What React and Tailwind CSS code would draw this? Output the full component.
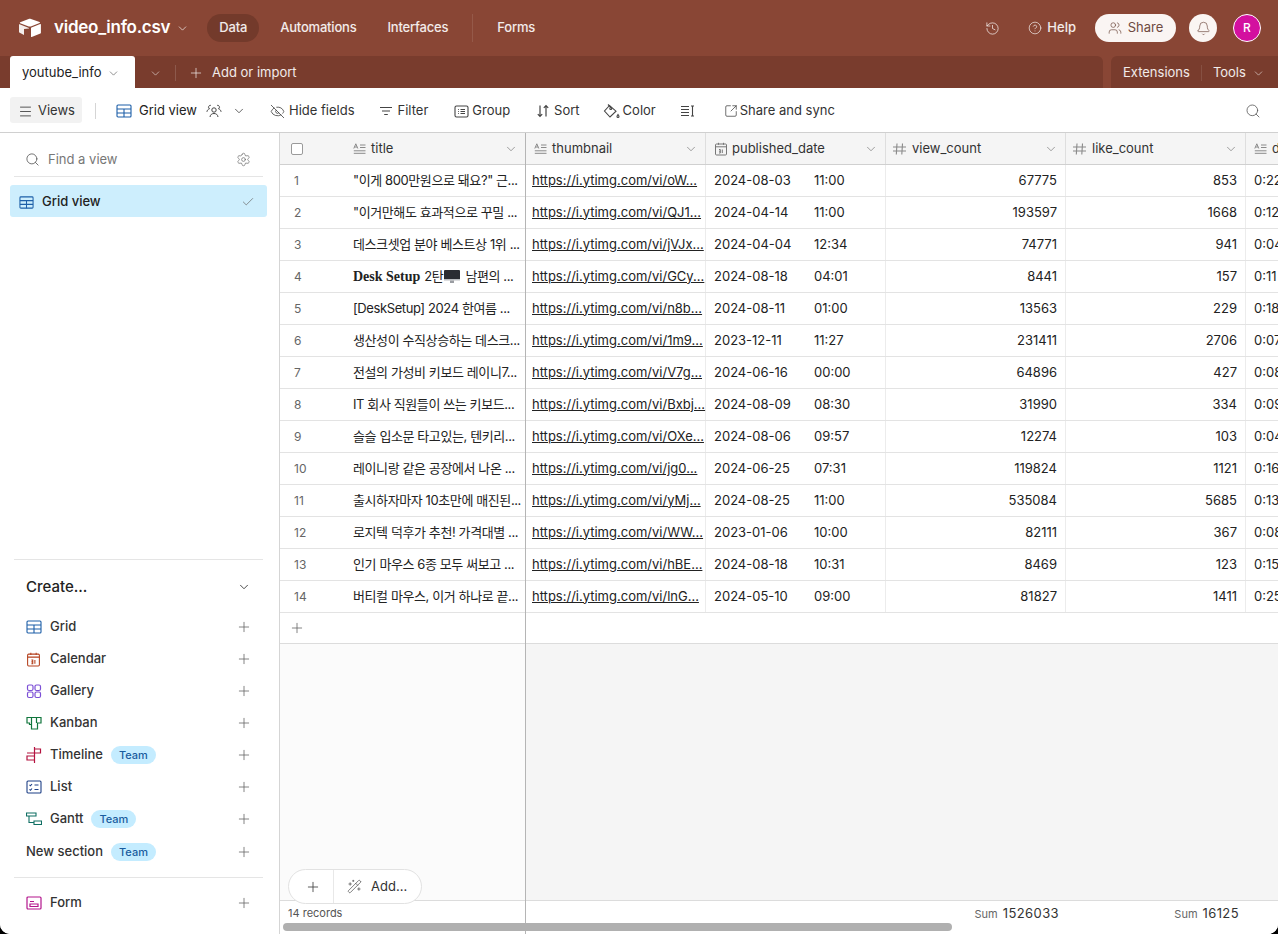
import { Bell, Check, ChevronDown, CircleHelp, EyeOff, History, Menu, Plus, Search, Settings, SquareArrowOutUpRight, Users, WandSparkles } from 'lucide-react';

const FONT = { fontFamily: 'Inter, "Noto Sans CJK KR", sans-serif' };

/* ── Data ── */
const ROWS = [
  { title: '"이게 800만원으로 돼요?" 근...', url: 'https://i.ytimg.com/vi/oW...', date: '2024-08-03', time: '11:00', views: 67775, likes: 853, dur: '0:22' },
  { title: '"이거만해도 효과적으로 꾸밀 ...', url: 'https://i.ytimg.com/vi/QJ1...', date: '2024-04-14', time: '11:00', views: 193597, likes: 1668, dur: '0:12' },
  { title: '데스크셋업 분야 베스트상 1위 ...', url: 'https://i.ytimg.com/vi/jVJx...', date: '2024-04-04', time: '12:34', views: 74771, likes: 941, dur: '0:04' },
  { title: null, url: 'https://i.ytimg.com/vi/GCy...', date: '2024-08-18', time: '04:01', views: 8441, likes: 157, dur: '0:11' },
  { title: '[DeskSetup] 2024 한여름 ...', url: 'https://i.ytimg.com/vi/n8b...', date: '2024-08-11', time: '01:00', views: 13563, likes: 229, dur: '0:18' },
  { title: '생산성이 수직상승하는 데스크...', url: 'https://i.ytimg.com/vi/1m9...', date: '2023-12-11', time: '11:27', views: 231411, likes: 2706, dur: '0:07' },
  { title: '전설의 가성비 키보드 레이니7...', url: 'https://i.ytimg.com/vi/V7g...', date: '2024-06-16', time: '00:00', views: 64896, likes: 427, dur: '0:08' },
  { title: 'IT 회사 직원들이 쓰는 키보드...', url: 'https://i.ytimg.com/vi/Bxbj...', date: '2024-08-09', time: '08:30', views: 31990, likes: 334, dur: '0:09' },
  { title: '슬슬 입소문 타고있는, 텐키리...', url: 'https://i.ytimg.com/vi/OXe...', date: '2024-08-06', time: '09:57', views: 12274, likes: 103, dur: '0:04' },
  { title: '레이니랑 같은 공장에서 나온 ...', url: 'https://i.ytimg.com/vi/jg0...', date: '2024-06-25', time: '07:31', views: 119824, likes: 1121, dur: '0:16' },
  { title: '출시하자마자 10초만에 매진된...', url: 'https://i.ytimg.com/vi/yMj...', date: '2024-08-25', time: '11:00', views: 535084, likes: 5685, dur: '0:13' },
  { title: '로지텍 덕후가 추천! 가격대별 ...', url: 'https://i.ytimg.com/vi/WW...', date: '2023-01-06', time: '10:00', views: 82111, likes: 367, dur: '0:08' },
  { title: '인기 마우스 6종 모두 써보고 ...', url: 'https://i.ytimg.com/vi/hBE...', date: '2024-08-18', time: '10:31', views: 8469, likes: 123, dur: '0:15' },
  { title: '버티컬 마우스, 이거 하나로 끝...', url: 'https://i.ytimg.com/vi/lnG...', date: '2024-05-10', time: '09:00', views: 81827, likes: 1411, dur: '0:25' },
];

/* ── Drawn icons ── */
function Logo() {
  return (
    <svg width="24" height="20" viewBox="0 0 24 20" fill="#fff">
      <path d="M10.6 1 2.2 4.2c-.5.2-.5.8 0 1l8.6 3.2c.7.2 1.4.2 2 0l8.8-3.3c.5-.2.5-.8 0-1L13 1c-.8-.3-1.6-.3-2.4 0Z" />
      <path d="M13 10.2v8.3c0 .4.4.6.7.5l8.7-3.5c.3-.1.5-.4.5-.7V6.6c0-.4-.4-.6-.7-.5l-8.7 3.5c-.3.1-.5.3-.5.6Z" />
      <path d="M11 10 1.6 6.3c-.3-.1-.6.1-.6.4v7.2c0 .2.1.4.3.5l4.7 2.5V11l5-.6Z" opacity=".9" />
    </svg>
  );
}

function GridIcon({ color = '#1d5fa8', size = 16 }) {
  return (
    <svg width={size} height={size} viewBox="0 0 16 16" fill="none" stroke={color} strokeWidth="1.1">
      <rect x="1" y="2" width="14" height="12" rx="1" />
      <path d="M1 6h14M1 10h14M8 6v8" />
    </svg>
  );
}

function TextIcon() {
  return (
    <svg width="13" height="12" viewBox="0 0 13 12" fill="none" stroke="#8a8a8a" strokeWidth="1" className="shrink-0">
      <path d="M.8 5.5 2.8.8l2 4.7M1.500 4h2.600M7 2h5.500M7 4.500h5.500M.8 7.800h11.700M.8 10.300h11.700" />
    </svg>
  );
}

function CalendarIcon({ color = '#777', size = 14 }) {
  return (
    <svg width={size} height={size} viewBox="0 0 14 14" fill="none" stroke={color} strokeWidth="1" className="shrink-0">
      <rect x="1.5" y="2" width="11" height="11" rx="1" />
      <path d="M1.500 4.800h11M4.500.8v2M9.500.8v2M5 7.500h1.300v3.500H5M5 9.200h1.300M8.300 7.500v3.500" />
    </svg>
  );
}

function HashIcon() {
  return (
    <svg width="15" height="14" viewBox="0 0 15 14" fill="none" stroke="#8a8a8a" strokeWidth="1.1" className="shrink-0 -ml-[2px]">
      <path d="M5 1.500 4.300 12.500M10.500 1.500 9.800 12.500M1 5h13M1 9h13" />
    </svg>
  );
}

function GalleryIcon() {
  return (
    <svg width="16" height="16" viewBox="0 0 16 16" fill="none" stroke="#7c4fd6" strokeWidth="1.2">
      <rect x="1.5" y="2" width="5.5" height="5.5" rx="1.5" />
      <rect x="9" y="2" width="5.5" height="5.5" rx="1.5" />
      <rect x="1.5" y="9" width="5.5" height="5.5" rx="1.5" />
      <rect x="9" y="9" width="5.5" height="5.5" rx="1.5" />
    </svg>
  );
}

function KanbanIcon() {
  return (
    <svg width="16" height="16" viewBox="0 0 16 16" fill="none" stroke="#11763d" strokeWidth="1.2">
      <path d="M1 2.500h14v5.500h-3.500v6H5.500V9.500H3.500V8H1ZM5.500 2.500V9.500M10.500 2.500V8" />
    </svg>
  );
}

function TimelineIcon() {
  return (
    <svg width="16" height="18" viewBox="0 0 16 18" fill="none" stroke="#b4123f" strokeWidth="1.2">
      <path d="M8.500 1v16M8.500 3h6v4H3.500M1 7h2.500M8.500 10H1v4h7.500" />
    </svg>
  );
}

function ListIcon() {
  return (
    <svg width="16" height="16" viewBox="0 0 16 16" fill="none" stroke="#1d3f86" strokeWidth="1.1">
      <rect x="1" y="2" width="14" height="12" rx="1" />
      <path d="m3.500 5.800 1 1 1.500-1.800M8.500 6h4M3.500 10.300l1 1 1.500-1.800M8.500 10.500h4" />
    </svg>
  );
}

function GanttIcon() {
  return (
    <svg width="16" height="16" viewBox="0 0 16 16" fill="none" stroke="#0f6e63" strokeWidth="1.1">
      <path d="M.5 2h9.500v3H.5ZM8 10h7.500v3.500H8ZM3 5v6.500h5" />
    </svg>
  );
}

function FormIcon() {
  return (
    <svg width="16" height="16" viewBox="0 0 16 16" fill="none" stroke="#b3148c" strokeWidth="1.2">
      <rect x="1" y="2" width="14" height="12" rx="1" />
      <path d="M4 6.500h4M4 9h8v2.500H4Z" />
    </svg>
  );
}

function GroupIcon() {
  return (
    <svg width="15" height="15" viewBox="0 0 15 15" fill="none" stroke="#444" strokeWidth="1.1">
      <rect x="1" y="2" width="13" height="11" rx="1.5" />
      <path d="M4 5.500h.8M6.500 5.500H11M4 7.500h.8M6.500 7.500H11M4 9.500h.8M6.500 9.500H11" />
    </svg>
  );
}

function FilterLines() {
  return (
    <svg width="14" height="14" viewBox="0 0 14 14" fill="none" stroke="#444" strokeWidth="1.2">
      <path d="M1 3.500h12M3 7h8M5.200 10.500h3.600" />
    </svg>
  );
}

function SortIcon() {
  return (
    <svg width="14" height="14" viewBox="0 0 14 14" fill="none" stroke="#444" strokeWidth="1.2">
      <path d="M4 1.500v11M1.800 10.200 4 12.500l2.200-2.300M10 12.500v-11M7.800 3.800 10 1.500l2.200 2.300" />
    </svg>
  );
}

function ColorIcon() {
  return (
    <svg width="17" height="17" viewBox="0 0 17 17" fill="none" stroke="#444" strokeWidth="1.1">
      <path d="M6.500 2.500 1.500 8l5.500 6 6-5.800ZM5 1.500l2.800 3" />
      <circle cx="7.800" cy="5.500" r="1" />
      <path d="M15 11.500c.7 1 1 1.500 1 2a1 1 0 0 1-2 0c0-.5.3-1 1-2Z" />
    </svg>
  );
}

function RowHeightIcon() {
  return (
    <svg width="15" height="14" viewBox="0 0 15 14" fill="none" stroke="#444" strokeWidth="1.1">
      <path d="M1 2.500h8M1 5.500h8M1 8.500h8M1 11.500h8M12.500 2v10M11 2h3M11 12h3" />
    </svg>
  );
}

/* three people, shared view */
function SharedIcon() {
  return (
    <svg width="16" height="14" viewBox="0 0 16 14" fill="none" stroke="#444" strokeWidth="1">
      <circle cx="8" cy="6" r="2.2" />
      <path d="M4 13c.3-2.500 2-3.500 4-3.500s3.700 1 4 3.500" />
      <path d="M4.800 1.300A1.900 1.900 0 0 0 3.500 4.800c-1.400.4-2.300 1.400-2.600 3M11.200 1.300a1.900 1.900 0 0 1 1.300 3.500c1.400.4 2.300 1.400 2.600 3" />
    </svg>
  );
}

/* monitor emoji in the 4th title */
function Monitor() {
  return (
    <svg width="16" height="15" viewBox="0 0 16 15" className="shrink-0 mx-px">
      <rect x="0" y="1" width="16" height="10" rx="1" fill="#2a2d33" />
      <rect x="0" y="10" width="16" height="1.5" fill="#b9bcc0" />
      <rect x="6" y="11.5" width="4" height="2.5" fill="#9a9da2" />
    </svg>
  );
}

/* ── Small pieces ── */
function NavLink({ children, active, className = '' }) {
  return (
    <div className={`h-7 flex items-center rounded-full text-[13px] font-medium tracking-[-0.2px] text-white/90 ${active ? 'bg-[#733a2b] px-3' : 'px-2'} ${className}`}>
      {children}
    </div>
  );
}

function ToolButton({ icon, label, gap = 'gap-[4px]', className = '' }) {
  return (
    <div className={`flex items-center text-[13px] text-[#333] ${gap} ${className}`}>
      {icon}
      {label && <span>{label}</span>}
    </div>
  );
}

function TeamBadge() {
  return (
    <span className="h-[18px] px-2 rounded-full bg-[#c4ecff] text-[#1a5c9e] text-[11px] font-medium flex items-center">Team</span>
  );
}

function CreateRow({ icon, label, badge, rowClass = 'h-8' }) {
  return (
    <div className={`flex items-center pl-[26px] pr-[27px] ${rowClass}`}>
      {icon && <div className="w-6 flex items-center shrink-0">{icon}</div>}
      <span className="text-[13px] text-[#333] font-medium">{label}</span>
      {badge && <div className="ml-2"><TeamBadge /></div>}
      <Plus size={16} strokeWidth={1.2} className="ml-auto text-[#666]" />
    </div>
  );
}

function HeaderCell({ icon, label, width }) {
  return (
    <div className={`h-full shrink-0 flex items-center pl-2 pr-[7px] border-r border-[#dedede] ${width}`}>
      <div className="w-[18px] flex items-center">{icon}</div>
      <span className="text-[13px] text-[#333]">{label}</span>
      <ChevronDown size={14} strokeWidth={1.2} className="ml-auto text-[#777]" />
    </div>
  );
}

function Sidebar() {
  return (
    <aside className="w-[280px] shrink-0 border-r border-[#d5d5d5] bg-white flex flex-col">
      <div className="ml-[14px] mr-[16px] h-[44px] pt-[10px] flex items-center pl-[11px] pr-[12px] border-b border-[#e5e5e5] shrink-0">
        <Search size={15} strokeWidth={1.3} className="text-[#555]" />
        <span className="ml-2 text-[13px] text-[#777]">Find a view</span>
        <Settings size={15} strokeWidth={1.1} className="ml-auto text-[#666]" />
      </div>
      <div className="ml-[10px] mr-[12px] mt-[8px] h-8 pt-[2px] rounded-[3px] bg-[#cdeefd] flex items-center pl-[9px] pr-3 shrink-0">
        <GridIcon size={15} />
        <span className="ml-[8px] text-[13px] font-medium text-[#222]">Grid view</span>
        <Check size={14} strokeWidth={1.2} className="ml-auto text-[#666]" />
      </div>

      <div className="mt-auto ml-[14px] mr-[16px] border-t border-[#e5e5e5] shrink-0" />
      <div className="flex items-center h-[50px] pt-[4px] pl-[26px] pr-[28px] shrink-0">
        <span className="text-[15px] font-medium text-[#222]">Create...</span>
        <ChevronDown size={14} strokeWidth={1.5} className="ml-auto text-[#333]" />
      </div>
      <div className="pt-[1px] shrink-0">
        <CreateRow icon={<GridIcon size={16} />} label="Grid" />
        <CreateRow icon={<CalendarIcon color="#b5421f" size={15} />} label="Calendar" />
        <CreateRow icon={<GalleryIcon />} label="Gallery" />
        <CreateRow icon={<KanbanIcon />} label="Kanban" />
        <CreateRow icon={<TimelineIcon />} label="Timeline" badge />
        <CreateRow icon={<ListIcon />} label="List" />
        <CreateRow icon={<GanttIcon />} label="Gantt" badge />
        <CreateRow label="New section" badge rowClass="h-[34px]" />
      </div>
      <div className="ml-[14px] mr-[16px] mt-[8px] border-t border-[#e5e5e5] shrink-0" />
      <div className="pt-[9px] pb-[15px] shrink-0">
        <CreateRow icon={<FormIcon />} label="Form" />
      </div>
    </aside>
  );
}

function Grid() {
  const cell = 'h-[32px] shrink-0 flex items-center border-b border-[#e3e3e3] text-[13px] text-[#222]';
  return (
    <main className="relative flex-1 min-w-0 flex overflow-hidden">
      {/* frozen pane */}
      <div className="w-[246px] shrink-0 flex flex-col border-r border-[#b5b5b5] bg-[#fbfbfb]">
        <div className="h-[32px] shrink-0 flex items-center bg-[#f5f5f5] border-b border-[#d0d0d0]">
          <input type="checkbox" readOnly className="ml-[11px] w-3 h-3 appearance-none border border-[#9a9a9a] rounded-[2px] bg-white" />
          <div className="ml-[50px] w-[18px] flex items-center"><TextIcon /></div>
          <span className="text-[13px] text-[#333]">title</span>
          <ChevronDown size={14} strokeWidth={1.2} className="ml-auto mr-[7px] text-[#777]" />
        </div>
        {ROWS.map((row, i) => (
          <div key={row.url} className={`${cell} bg-white`}>
            <span className="w-[73px] shrink-0 pl-[14px] text-[12px] text-[#666]">{i + 1}</span>
            {row.title ? (
              <span className="whitespace-nowrap tracking-[-0.4px]">{row.title}</span>
            ) : (
              <span className="flex items-center whitespace-nowrap tracking-[-0.4px]">
                <b className="font-bold text-[14px] tracking-normal" style={{ fontFamily: '"Liberation Serif", serif' }}>Desk Setup</b>
                <span className="ml-1">2탄</span>
                <Monitor />
                <span className="ml-1">남편의 ...</span>
              </span>
            )}
          </div>
        ))}
        <div className="h-[31px] shrink-0 bg-white border-b border-[#dcdcdc] flex items-center pl-[9px]">
          <Plus size={16} strokeWidth={1.2} className="text-[#666]" />
        </div>
        <div className="flex-1" />
        <div className="h-[34px] shrink-0 bg-white border-t border-[#dcdcdc] pl-2 pt-[4px] text-[11px] text-[#555]">14 records</div>
      </div>

      {/* scrolling pane */}
      <div className="flex-1 min-w-0 flex flex-col bg-[#f5f5f5] overflow-hidden">
        <div className="h-[32px] shrink-0 flex items-center bg-[#f5f5f5] border-b border-[#d0d0d0]">
          <HeaderCell width="w-[180px]" icon={<TextIcon />} label="thumbnail" />
          <HeaderCell width="w-[180px]" icon={<CalendarIcon />} label="published_date" />
          <HeaderCell width="w-[180px]" icon={<HashIcon />} label="view_count" />
          <HeaderCell width="w-[180px]" icon={<HashIcon />} label="like_count" />
          <div className="flex-1 pl-2 flex items-center gap-[5px] overflow-hidden">
            <TextIcon />
            <span className="text-[13px] text-[#333]">duration</span>
          </div>
        </div>
        {ROWS.map((row) => (
          <div key={row.url} className={`${cell} bg-white`}>
            <div className="w-[180px] h-full shrink-0 flex items-center pl-[6px] border-r border-[#ececec]">
              <span className="underline whitespace-nowrap">{row.url}</span>
            </div>
            <div className="w-[180px] h-full shrink-0 flex items-center pl-2 border-r border-[#ececec]">
              <span className="w-[100px]">{row.date}</span>
              <span>{row.time}</span>
            </div>
            <div className="w-[180px] h-full shrink-0 flex items-center justify-end pr-2 border-r border-[#ececec]">{row.views}</div>
            <div className="w-[180px] h-full shrink-0 flex items-center justify-end pr-2 border-r border-[#ececec]">{row.likes}</div>
            <div className="flex-1 pl-2 whitespace-nowrap overflow-hidden">{row.dur}</div>
          </div>
        ))}
        <div className="h-[31px] shrink-0 bg-white border-b border-[#dcdcdc]" />
        <div className="flex-1" />
        <div className="h-[34px] shrink-0 bg-white border-t border-[#dcdcdc] flex text-[13px] text-[#333]">
          <div className="w-[360px] shrink-0" />
          <div className="w-[180px] shrink-0 flex justify-end items-baseline gap-[5px] pr-[7px] pt-[3px] tracking-[0.4px]">
            <span className="text-[11px] text-[#666] tracking-normal">Sum</span>1526033
          </div>
          <div className="w-[180px] shrink-0 flex justify-end items-baseline gap-[5px] pr-[7px] pt-[3px] tracking-[0.4px]">
            <span className="text-[11px] text-[#666] tracking-normal">Sum</span>16125
          </div>
        </div>
      </div>

      {/* add record pill, floats over the grid */}
      <div className="absolute left-2 bottom-[30px] h-[35px] w-[134px] flex items-center rounded-full border border-[#e2e2e2] bg-white text-[13px] text-[#333]">
        <div className="w-[45px] h-full flex items-center justify-center pl-1 border-r border-[#e8e8e8]">
          <Plus size={16} strokeWidth={1.3} className="text-[#444]" />
        </div>
        <WandSparkles size={15} strokeWidth={1.1} className="ml-[13px] text-[#444]" />
        <span className="ml-[9px]">Add...</span>
      </div>

      {/* horizontal scrollbar */}
      <div className="absolute left-[3px] bottom-[3px] h-2 w-[669px] rounded-full bg-[#b0b0b0]" />
    </main>
  );
}

export default function App() {
  return (
    <div className="w-full h-[934px] bg-black overflow-hidden" style={FONT}>
      <div className="w-full h-full bg-white rounded-b-[10px] overflow-hidden flex flex-col">
        {/* Top bar */}
        <header className="h-[56px] shrink-0 bg-[#894635] flex items-center pl-[18px] pr-[17px]">
          <Logo />
          <span className="ml-[12px] text-[17px] font-semibold tracking-[-0.25px] text-white">video_info.csv</span>
          <ChevronDown size={13} strokeWidth={1.5} className="ml-[6px] text-white/80" />
          <div className="ml-[18px] flex items-center">
            <NavLink active>Data</NavLink>
            <NavLink className="ml-[13px]">Automations</NavLink>
            <NavLink className="ml-[15px]">Interfaces</NavLink>
            <div className="w-px h-7 bg-white/10 ml-[16px]" />
            <NavLink className="ml-4">Forms</NavLink>
          </div>
          <div className="ml-auto flex items-center text-white/90">
            <History size={15} strokeWidth={1.2} />
            <CircleHelp size={14} strokeWidth={1.2} className="ml-[28px]" />
            <span className="ml-[5px] text-[13px] font-medium">Help</span>
            <div className="ml-[19px] h-7 w-[81px] rounded-full bg-[#faf5f3] flex items-center justify-center gap-[6px] text-[13px] text-[#6e4a3f]">
              <Users size={14} strokeWidth={1.2} />Share
            </div>
            <div className="ml-[13px] w-7 h-7 rounded-full bg-[#faf5f3] flex items-center justify-center text-[#7b5a50]">
              <Bell size={15} strokeWidth={1.2} />
            </div>
            <div className="ml-[16px] w-7 h-7 rounded-full bg-[#d3109f] border border-white flex items-center justify-center text-[12px] font-medium text-white">R</div>
          </div>
        </header>

        {/* Tab bar */}
        <div className="h-[32px] shrink-0 bg-[#894635] flex text-white/90 text-[13px]">
          <div className="flex-1 min-w-0 bg-[#793c2d] rounded-tr-[6px] flex items-center pl-[10px] pt-[2px]">
            <div className="h-[32px] -mt-[2px] pt-[2px] w-[125px] rounded-t-[3px] bg-white text-[#222] flex items-center pl-[12px] shrink-0">
              youtube_info
              <ChevronDown size={13} strokeWidth={1.2} className="ml-[6px] text-[#555]" />
            </div>
            <ChevronDown size={13} strokeWidth={1.2} className="ml-[14px] text-white/80" />
            <div className="w-px h-4 bg-white/15 ml-[13px]" />
            <Plus size={16} strokeWidth={1.2} className="ml-[12px] text-white/80" />
            <span className="ml-[8px]">Add or import</span>
          </div>
          <div className="w-[167px] shrink-0 ml-[8px] bg-[#793c2d] rounded-tl-[6px] flex items-center pl-[12px] pt-[2px]">
            Extensions
            <div className="w-px h-4 bg-white/10 ml-[11px]" />
            <span className="ml-[11px]">Tools</span>
            <ChevronDown size={13} strokeWidth={1.2} className="ml-[6px] text-white/80" />
          </div>
        </div>

        {/* View toolbar */}
        <div className="h-[45px] pt-[2px] shrink-0 bg-white border-b border-[#d0d0d0] flex items-center pl-[10px] pr-[17px]">
          <div className="h-[26px] -mt-[2px] w-[72px] rounded-[3px] bg-[#f2f2f2] flex items-center pl-2 pt-[2px] gap-[5px] text-[13px] text-[#333]">
            <Menu size={15} strokeWidth={1.3} />Views
          </div>
          <div className="w-px h-4 bg-[#d5d5d5] ml-[13px]" />
          <div className="ml-[20px]"><GridIcon size={16} /></div>
          <span className="ml-[7px] text-[13px] text-[#222]">Grid view</span>
          <div className="ml-[9px]"><SharedIcon /></div>
          <ChevronDown size={14} strokeWidth={1.3} className="ml-[10px] text-[#333]" />
          <ToolButton className="ml-[24px]" icon={<EyeOff size={15} strokeWidth={1.2} />} label="Hide fields" />
          <ToolButton className="ml-[24px]" gap="gap-[5px]" icon={<FilterLines />} label="Filter" />
          <ToolButton className="ml-[26px]" gap="gap-[3px]" icon={<GroupIcon />} label="Group" />
          <ToolButton className="ml-[26px]" icon={<SortIcon />} label="Sort" />
          <ToolButton className="ml-[23px]" gap="gap-[3px]" icon={<ColorIcon />} label="Color" />
          <ToolButton className="ml-[24px]" icon={<RowHeightIcon />} />
          <ToolButton className="ml-[29px]" gap="gap-[2px]" icon={<SquareArrowOutUpRight size={14} strokeWidth={1.2} />} label="Share and sync" />
          <Search size={16} strokeWidth={1.2} className="ml-auto text-[#555]" />
        </div>

        <div className="flex-1 min-h-0 flex">
          <Sidebar />
          <Grid />
        </div>
      </div>
    </div>
  );
}
